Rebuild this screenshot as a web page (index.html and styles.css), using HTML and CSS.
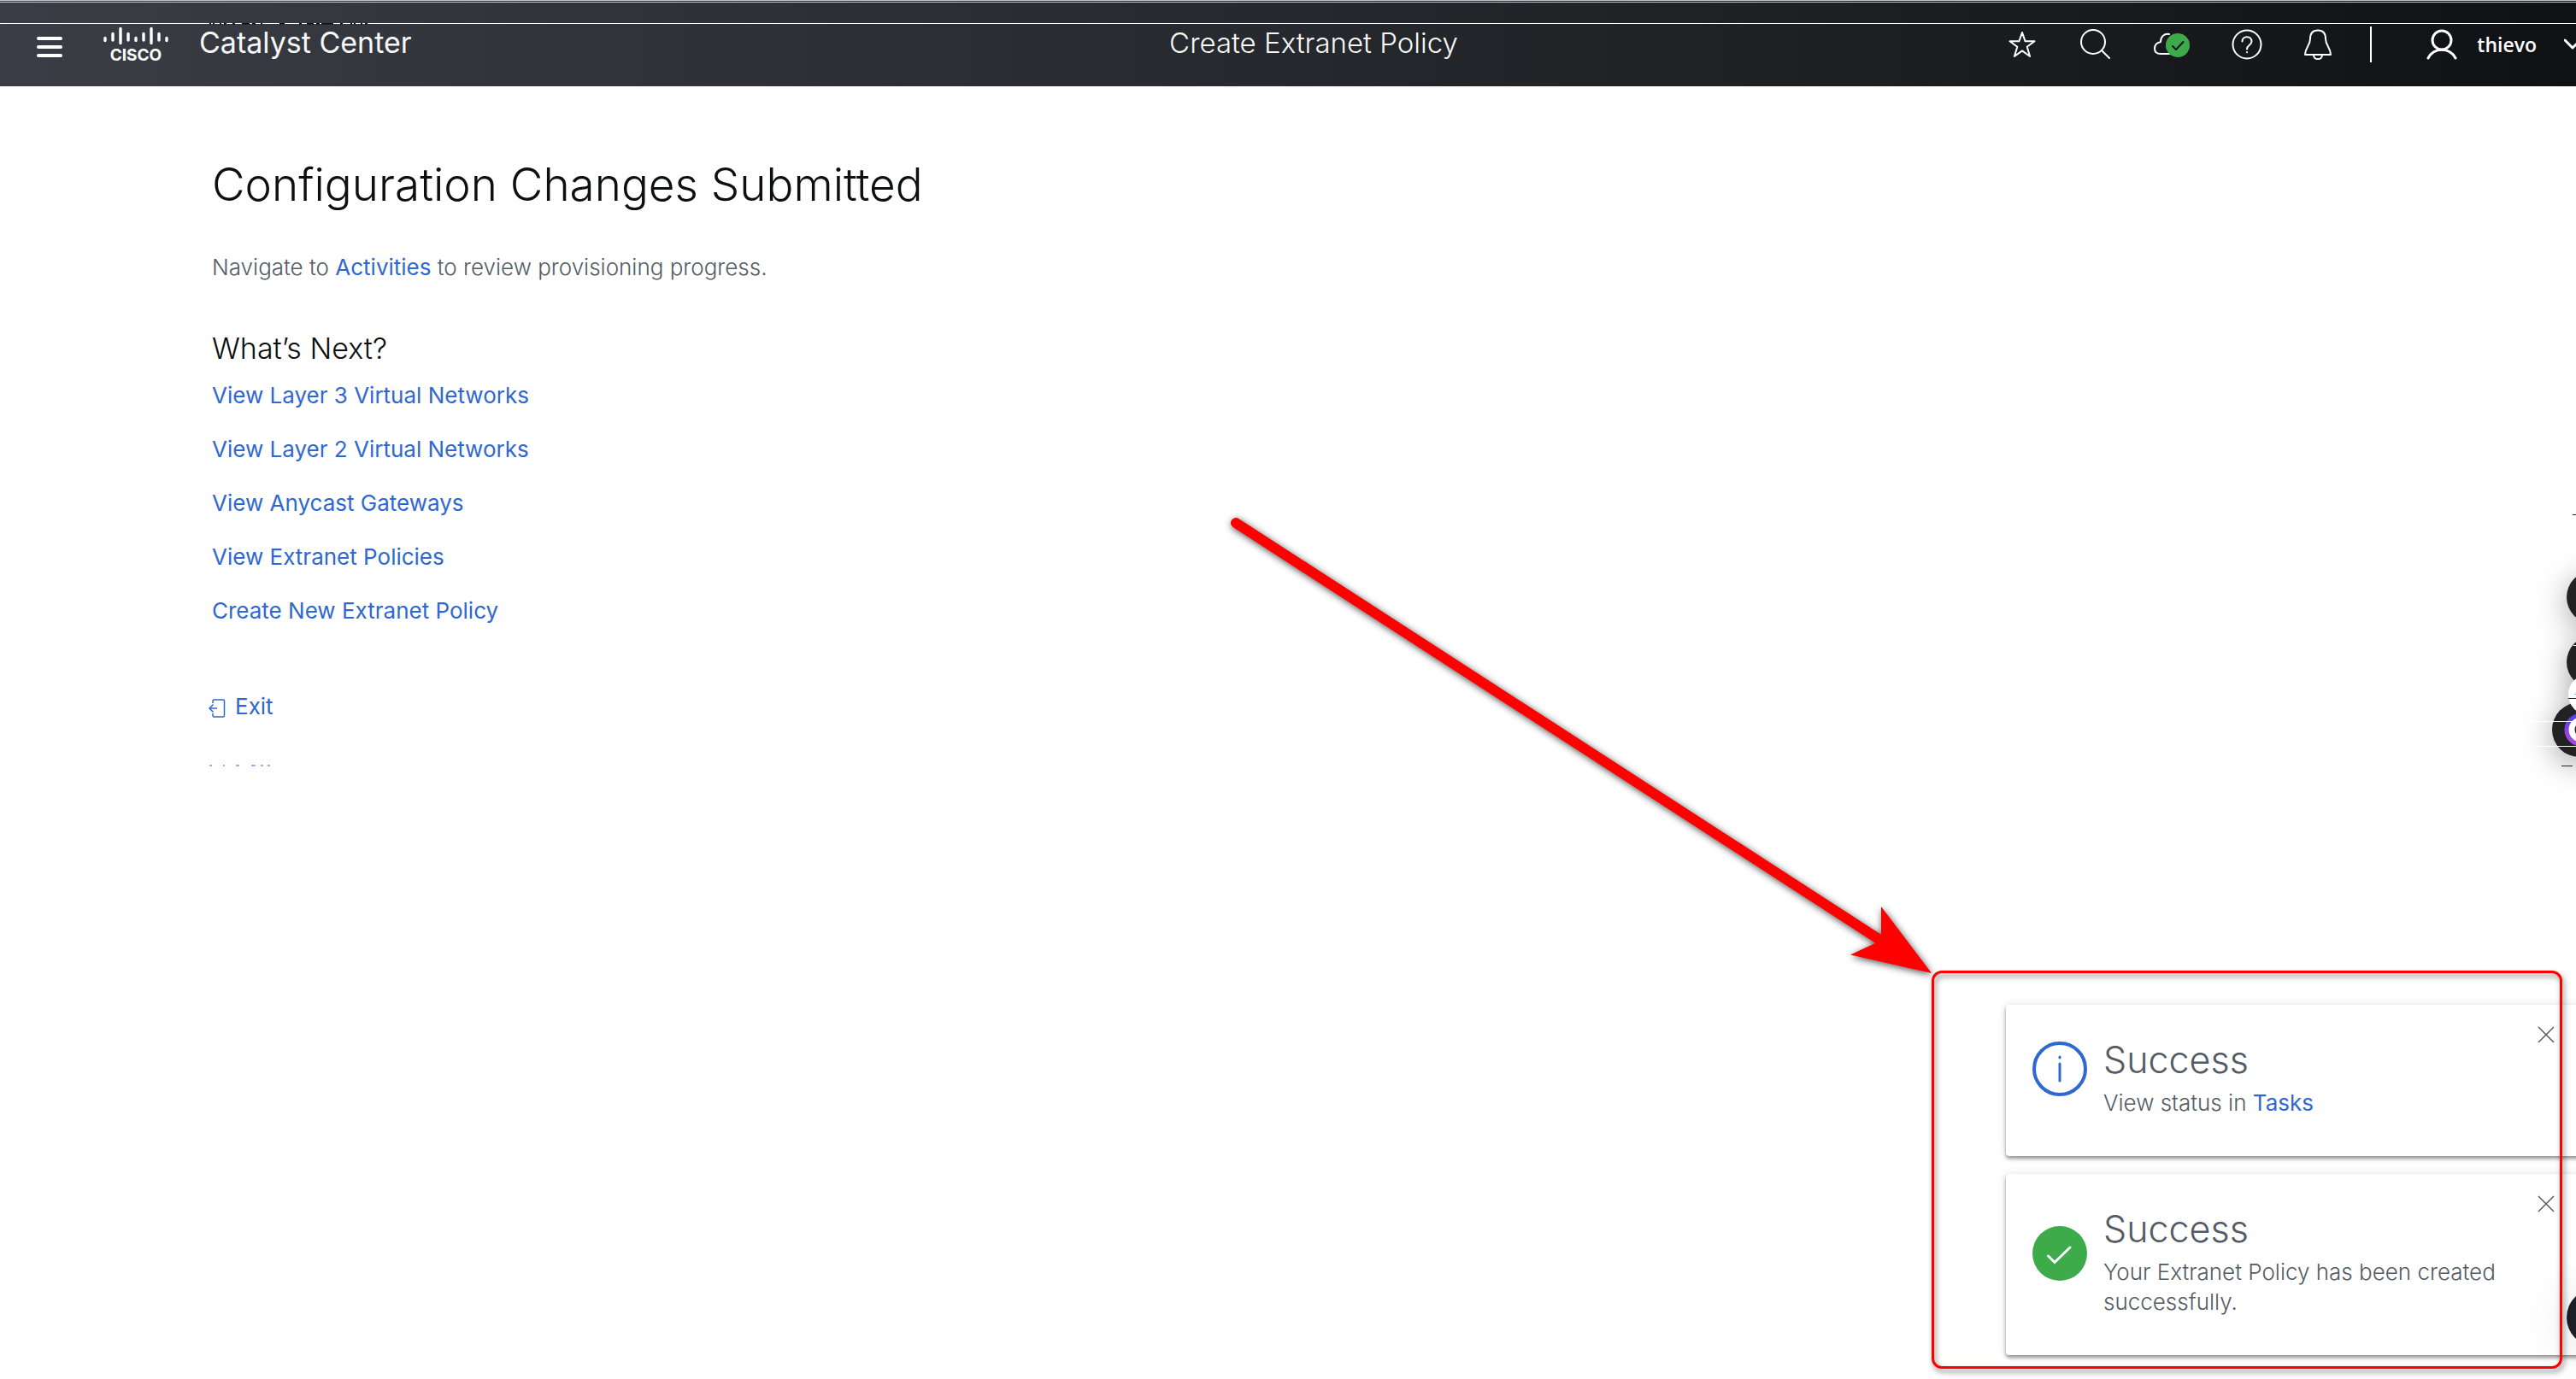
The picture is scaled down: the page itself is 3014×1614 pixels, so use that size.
FILE: index.html
```html
<!DOCTYPE html>
<html lang="en">
<head>
<meta charset="utf-8">
<meta name="viewport" content="width=device-width, initial-scale=1">
<title>Create Extranet Policy - Catalyst Center</title>
<link rel="stylesheet" href="styles.css">
</head>
<body>
<div class="app">
  <header class="topbar">
    <svg class="scanline" height="2" width="100%" aria-hidden="true">
      <rect width="100%" height="1" fill="#fff"/>
      <path d="M245 .5h185" stroke="#101114" stroke-dasharray="2 2 2 6 2 3 3 7 3 8 9 3 4 6 2 20 6 17 3 6 8 3 4 2 14 8 3 9"/>
    </svg>
    <div class="brand">
      <button class="icon-btn menu" type="button" aria-label="Menu"><svg width="32" height="26" viewBox="0 0 32 26"><path d="M3 3h26M3 13h26M3 23h26" stroke-width="4"/></svg></button>
      <a class="logo" href="#">
        <svg width="76" height="22" viewBox="0 0 76 22" aria-hidden="true"><path d="M2 13.500v3M11 8.500v7.500M20 2.500v17M29 8.500v7.500M38 13.500v3M47 8.500v7.500M56 2.500v17M65 8.500v7.500M74 13.500v3" stroke-width="3.400"/></svg>
        <span class="logo-word">CISCO</span>
      </a>
      <span class="product">Catalyst Center</span>
    </div>
    <h1 class="flow-title">Create Extranet Policy</h1>
    <nav class="tools" aria-label="Tools">
      <button class="icon-btn" type="button" aria-label="Favorites"><svg width="36" height="36" viewBox="0 0 36 36"><path d="M18 4l3.600 10.300H32.500l-8.800 6.500 3.400 11.200L18 25.400 8.900 32l3.400-11.200-8.800-6.500h10.900z"/></svg></button>
      <button class="icon-btn" type="button" aria-label="Search"><svg width="36" height="36" viewBox="0 0 36 36"><circle cx="16" cy="15" r="14"/><path d="M26 25l9 9"/></svg></button>
      <button class="icon-btn" type="button" aria-label="System health"><svg width="44" height="36" viewBox="0 0 44 36"><path d="M20 6C14 5 10 9 10 15 5 16 3 19 3 23c0 4 3 6 7 6h12"/><circle class="ok" cx="30" cy="19" r="14"/><path class="ok-tick" d="M24 20l4 4 8.500-9"/></svg></button>
      <button class="icon-btn" type="button" aria-label="Help"><svg width="36" height="36" viewBox="0 0 36 36"><circle cx="18" cy="18" r="16.500"/><path d="M12.500 14.500c0-7 11-7 11 0 0 4.500-5.500 4-5.500 9M18 27v.2"/></svg></button>
      <button class="icon-btn" type="button" aria-label="Notifications"><svg width="32" height="36" viewBox="0 0 32 36"><path d="M16 1.500c-6 0-9 4-9 10 0 8-6 10-6 18.500h30c0-8.500-6-10.500-6-18.500 0-6-3-10-9-10zM11 30c0 7 10 7 10 0"/></svg></button>
      <span class="divider"></span>
      <button class="user" type="button"><svg width="36" height="36" viewBox="0 0 36 36"><circle cx="18" cy="13" r="11"/><path d="M2 34C9 21 27 21 34 34"/></svg><span class="user-name">thievo</span><svg width="20" height="14" viewBox="0 0 20 14"><path d="M1 2l9 9 9-9"/></svg></button>
    </nav>
  </header>

  <main class="content">
    <h2 class="page-title">Configuration Changes Submitted</h2>
    <p class="lead">Navigate to <a href="#">Activities</a> to review provisioning progress.</p>
    <h3 class="next-title">What’s Next?</h3>
    <ul class="links">
      <li><a href="#">View Layer 3 Virtual Networks</a></li>
      <li><a href="#">View Layer 2 Virtual Networks</a></li>
      <li><a href="#">View Anycast Gateways</a></li>
      <li><a href="#">View Extranet Policies</a></li>
      <li><a href="#">Create New Extranet Policy</a></li>
    </ul>
    <a class="exit" href="#"><svg width="20" height="22" viewBox="0 0 20 22" aria-hidden="true"><path d="M5 5V2.500Q5 1 6.500 1h10.500q1.500 0 1.500 1.500v17q0 1.500-1.500 1.500H6.500Q5 21 5 19.500V17M10 11H1M5.500 6.500L1 11l4.500 4.500"/></svg>Exit</a>
    <svg class="exit-trace" width="76" height="2" viewBox="0 0 76 2" aria-hidden="true"><path d="M1 1h3M17 1h2M32 1h4M50 1h5M61 1h3M69 1h3"/></svg>
  </main>
</div>

<svg class="side-widgets" width="100" height="350" viewBox="0 0 100 350" aria-hidden="true">
  <g class="widget-shadow">
    <circle cx="120" cy="119" r="31" fill="#222"/>
    <circle cx="120" cy="195" r="31" fill="#222"/>
    <circle cx="104" cy="274" r="32" fill="#222"/>
    <circle cx="115" cy="233" r="24" fill="#fff"/>
  </g>
  <circle cx="106" cy="274" r="17" fill="#fff" stroke="url(#ring)" stroke-width="5"/>
  <path d="M100 269q-3 5 0 10z" fill="#222"/>
  <path d="M96 22.500h4M91 237.500h9M83 316.500h13" stroke="#222"/>
  <path d="M97 175.500h3M30 264.500h70M35 293.500h65" stroke="#fff"/>
  <path d="M98 232.500h2" stroke="#7fc4ff"/>
  <defs><linearGradient id="ring" x1="0" y1="1" x2=".6" y2="0"><stop offset="0" stop-color="#b34be0"/><stop offset=".6" stop-color="#6a3ee8"/><stop offset="1" stop-color="#4a42ee"/></linearGradient></defs>
</svg>

<section class="toasts" aria-label="Notifications">
  <article class="toast">
    <svg class="toast-icon" width="64" height="64" viewBox="0 0 64 64" aria-hidden="true"><circle cx="32" cy="32" r="30" fill="none" stroke="#2f68cf" stroke-width="4"/><path d="M32 18v1M32 26v20" stroke="#2f68cf" stroke-width="3" stroke-linecap="round"/></svg>
    <div class="toast-body">
      <h4 class="toast-title">Success</h4>
      <p class="toast-text">View status in <a href="#">Tasks</a></p>
    </div>
    <button class="close" type="button" aria-label="Close"><svg width="20" height="20" viewBox="0 0 20 20"><path d="M1 1l18 18M19 1L1 19"/></svg></button>
  </article>
  <article class="toast">
    <svg class="toast-icon" width="64" height="64" viewBox="0 0 64 64" aria-hidden="true"><circle cx="32" cy="32" r="32" fill="#3eab4b"/><path d="M18.500 35l7.500 7.500L44 25" fill="none" stroke="#fff" stroke-width="3" stroke-linecap="round"/></svg>
    <div class="toast-body">
      <h4 class="toast-title">Success</h4>
      <p class="toast-text">Your Extranet Policy has been created successfully.</p>
    </div>
    <button class="close" type="button" aria-label="Close"><svg width="20" height="20" viewBox="0 0 20 20"><path d="M1 1l18 18M19 1L1 19"/></svg></button>
  </article>
</section>

<button class="chat" type="button" aria-label="Chat"></button>
<div class="callout"></div>
<svg class="arrow" width="850" height="560" viewBox="0 0 850 560" aria-hidden="true"><path d="M16 17L768 504" stroke="#f00" stroke-width="12" stroke-linecap="round"/><path d="M771 466l59 78-95-21.500 29-13.500 7-11z" fill="#f00"/></svg>
</body>
</html>
```
FILE: styles.css
```css
* { box-sizing: border-box; }

body {
  margin: 0;
  min-height: 100vh;
  position: relative;
  overflow: hidden;
  background: #fff;
  color: #0e0f10;
  font-family: Inter, "Liberation Sans", sans-serif;
  font-size: 26px;
  line-height: 36px;
}

h1, h2, h3, h4, p, ul { margin: 0; padding: 0; font-weight: 300; }
ul { list-style: none; }
a { color: #2f68cf; text-decoration: none; font-weight: 400; }
button { border: 0; padding: 0; background: none; color: inherit; font: inherit; }
svg { display: block; flex: none; }

/* the app is slightly wider than the window and runs off its right edge */
.app { width: calc(100% + 60px); }

/* top bar */
.topbar {
  position: relative;
  display: grid;
  grid-template-columns: 1fr auto 1fr;
  align-items: center;
  height: 101px;
  padding: 0 54px;
  border-top: 3px double #c4c5c8;
  background: linear-gradient(90deg, #3a3d45 0%, #313439 20%, #25282c 50%, #191a1d 80%, #0f1013 100%);
  color: #f7f7f7;
}
.scanline { position: absolute; top: 24px; left: 0; }
.topbar svg { fill: none; stroke: #fff; stroke-width: 2; stroke-linecap: round; stroke-linejoin: round; }
.topbar .scanline { stroke: none; stroke-linecap: butt; }
.brand { display: flex; align-items: center; margin-left: -12px; }
.menu { padding-top: 5px; }
.logo { display: grid; justify-items: center; gap: 4px; margin: 0 36px 0 47px; color: #fff; }
.logo-word { font-size: 19px; line-height: 16px; font-weight: 700; }
.product { padding-bottom: 5px; font-size: 34px; line-height: 40px; }
.flow-title { padding-bottom: 5px; font-size: 33px; line-height: 40px; }
.tools { display: flex; align-items: center; justify-content: flex-end; gap: 49px; }
.divider { width: 2px; height: 42px; margin-left: -4px; background: #fff; }
.user { display: flex; align-items: center; margin-left: 15px; }
.topbar .user svg { stroke-width: 3; }
.user-name { margin: 0 32px 0 23px; font: 600 23px/36px "Open Sans", sans-serif; color: #fff; }
.topbar .ok { fill: #3eab4b; stroke: none; }
.topbar .ok-tick { stroke: #17181b; }

/* page content */
.content { padding: 83px 248px 0; }
.page-title { font-size: 53px; line-height: 64px; }
.lead { margin-top: 47px; color: #545b64; }
.next-title { margin-top: 57px; font-size: 34px; line-height: 40px; }
.links { display: grid; gap: 27px; margin-top: 17px; }
.exit { display: flex; align-items: center; gap: 11px; width: max-content; margin: 76px 0 0 -4px; }
.exit svg { margin-top: 4px; fill: none; stroke: #2f68cf; stroke-width: 1.5; }
.exit-trace { margin: 50px 0 0 -4px; stroke: #2f68cf; }

/* floating widgets cut by the window's edge */
.side-widgets { position: absolute; top: 580px; right: 0; overflow: visible; }
.widget-shadow { filter: drop-shadow(0 8px 18px rgba(0, 0, 0, .35)); }
.chat {
  position: absolute;
  right: -57px;
  bottom: 38px;
  width: 68px;
  height: 68px;
  border-radius: 50%;
  background: #1d1d28;
  box-shadow: 0 4px 60px rgba(0, 0, 0, .14);
}

/* toasts */
.toasts {
  position: absolute;
  right: -40px;
  bottom: 28px;
  display: grid;
  gap: 21px;
  width: 707px;
}
.toast {
  display: flex;
  gap: 19px;
  padding: 38px 65px 45px 31px;
  border-radius: 4px;
  background: #fff;
  box-shadow: 0 3px 4px rgba(0, 0, 0, .4), 0 0 12px rgba(0, 0, 0, .1);
  color: #545b64;
}
.toast-icon { align-self: center; margin-bottom: 20px; }
.toast-body { flex: 1; }
.toast-title { font-size: 43px; line-height: 52px; }
.toast-text { margin-top: 7px; line-height: 35px; }
.close { align-self: flex-start; margin-top: -13px; }
.close svg { stroke: #545b64; stroke-width: 1.5; }

/* annotation */
.callout {
  position: absolute;
  right: 16px;
  bottom: 12px;
  width: 738px;
  height: 466px;
  border: 3px solid #f00;
  border-radius: 12px;
  filter: drop-shadow(2px 4px 3px rgba(0, 0, 0, .5));
  pointer-events: none;
}
.arrow {
  position: absolute;
  right: 734px;
  bottom: 459px;
  overflow: visible;
  filter: drop-shadow(1px 2px 4px rgba(0, 0, 0, .7));
  pointer-events: none;
}
```
